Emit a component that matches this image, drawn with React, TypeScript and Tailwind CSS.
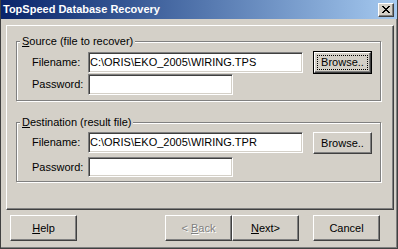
import React from "react";

const bevel =
  "border border-t-white border-l-white border-b-[#404040] border-r-[#404040] shadow-[inset_-1px_-1px_0_#808080]";
const sunken =
  "border border-t-[#808080] border-l-[#808080] border-b-white border-r-white shadow-[inset_1px_1px_0_#404040,inset_-1px_-1px_0_#d4d0c8] bg-white";

function CloseX() {
  const cells: [number, number][] = [];
  const rows = ["XX....XX", ".XX..XX.", "..XXXX..", "...XX...", "..XXXX..", ".XX..XX.", "XX....XX"];
  rows.forEach((r, y) => r.split("").forEach((c, x) => c === "X" && cells.push([x, y])));
  return (
    <svg width="8" height="7" viewBox="0 0 8 7" shapeRendering="crispEdges">
      {cells.map(([x, y]) => (
        <rect key={`${x}-${y}`} x={x} y={y} width="1" height="1" fill="#000" />
      ))}
    </svg>
  );
}

function Field({ w, h, value }: { w: string; h: string; value?: string }) {
  return (
    <div className={`${w} ${h} ${sunken} flex items-center pl-[1px] whitespace-nowrap overflow-hidden`}>
      {value}
    </div>
  );
}

function Label({ children, h }: { children: React.ReactNode; h: string }) {
  return <div className={`w-[56px] ${h} flex items-center`}>{children}</div>;
}

export default function App() {
  return (
    <div className="w-[398px] h-[249px] bg-[#d4d0c8] border-l border-r border-b border-[#404040] shadow-[inset_-1px_-1px_0_#808080] flex flex-col text-[11px] leading-[13px] text-black font-['Liberation_Sans',Arial,sans-serif]">
      {/* Title bar */}
      <div className="h-[19px] flex items-center bg-linear-to-r from-[#0a246a] to-[#a6caf0]">
        <span className="pl-[2px] font-bold text-white">TopSpeed Database Recovery</span>
        <div className={`ml-auto mr-[3px] w-[16px] h-[14px] bg-[#d4d0c8] ${bevel} flex items-center justify-center`}>
          <CloseX />
        </div>
      </div>

      {/* Panel */}
      <div className={`ml-[5px] mt-[6px] w-[388px] h-[185px] ${bevel} flex flex-col pl-[9px] pt-[15px]`}>
        {/* Source group */}
        <div className="w-[365px] h-[60px] border border-[#808080] shadow-[inset_1px_1px_0_#fff,1px_1px_0_#fff] flex flex-col">
          <span className="self-start ml-[3px] -mt-[7px] px-[2px] h-[13px] bg-[#d4d0c8]">
            <u>S</u>ource (file to recover)
          </span>
          <div className="pl-[15px] flex flex-col">
            <div className="flex items-start mt-[3px] h-[23px]">
              <div className="mt-[1px]">
                <Label h="h-[21px]">Filename:</Label>
              </div>
              <div className="mt-[1px]">
                <Field w="w-[215px]" h="h-[21px]" value="C:\ORIS\EKO_2005\WIRING.TPS" />
              </div>
              <div className="ml-[10px] w-[59px] h-[23px] border border-black flex">
                <div className={`flex-1 ${bevel} flex p-[2px]`}>
                  <div className="flex-1 border border-dotted border-black flex items-center justify-center">
                    Browse..
                  </div>
                </div>
              </div>
            </div>
            <div className="flex items-start h-[21px]">
              <Label h="h-[21px]">Password:</Label>
              <Field w="w-[145px]" h="h-[21px]" />
            </div>
          </div>
        </div>

        {/* Destination group */}
        <div className="mt-[21px] w-[365px] h-[60px] border border-[#808080] shadow-[inset_1px_1px_0_#fff,1px_1px_0_#fff] flex flex-col">
          <span className="self-start ml-[3px] -mt-[7px] px-[2px] h-[13px] bg-[#d4d0c8]">
            <u>D</u>estination (result file)
          </span>
          <div className="pl-[15px] flex flex-col">
            <div className="flex items-start mt-[3px] h-[21px]">
              <Label h="h-[21px]">Filename:</Label>
              <Field w="w-[215px]" h="h-[21px]" value="C:\ORIS\EKO_2005\WIRING.TPR" />
              <div className={`ml-[10px] w-[59px] h-[22px] ${bevel} flex items-center justify-center`}>
                Browse..
              </div>
            </div>
            <div className="flex items-start mt-[4px] h-[20px]">
              <Label h="h-[20px]">Password:</Label>
              <Field w="w-[145px]" h="h-[20px]" />
            </div>
          </div>
        </div>
      </div>

      {/* Buttons */}
      <div className="mt-[5px] flex h-[26px]">
        <div className={`ml-[9px] w-[67px] h-[26px] ${bevel} flex items-center justify-center`}>
          <span>
            <u>H</u>elp
          </span>
        </div>
        <div className={`ml-[88px] w-[67px] h-[26px] ${bevel} flex items-center justify-center text-[#808080] [text-shadow:1px_1px_0_#fff]`}>
          <span>
            &lt; <u>B</u>ack
          </span>
        </div>
        <div className={`w-[67px] h-[26px] ${bevel} flex items-center justify-center`}>
          <span>
            <u>N</u>ext&gt;
          </span>
        </div>
        <div className={`ml-[14px] w-[67px] h-[26px] ${bevel} flex items-center justify-center`}>
          Cancel
        </div>
      </div>
    </div>
  );
}
